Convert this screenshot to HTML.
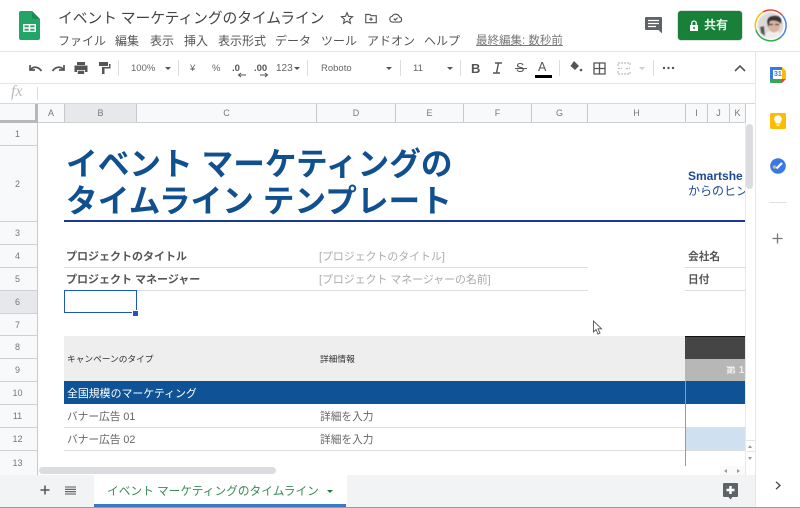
<!DOCTYPE html>
<html lang="ja"><head><meta charset="utf-8"><title>Sheet</title>
<style>
html,body{margin:0;padding:0;background:#fff}
#p{position:relative;width:800px;height:508px;overflow:hidden;background:#fff;font-family:"Liberation Sans","Noto Sans CJK JP",sans-serif;color:#444}
#p div,#p span.a,#p svg{position:absolute}
.t{white-space:nowrap;line-height:1}
.m{top:34px;font-size:12px;color:#555;line-height:14px;white-space:nowrap}
.ch{top:104px;height:18px;line-height:18px;font-size:9px;color:#777;text-align:center;background:#f8f9fa;border-right:1px solid #c8c8c8;box-sizing:border-box}
.rh{left:0;width:38px;box-sizing:border-box;background:#f8f9fa;border-bottom:1px solid #d0d0d0;border-right:1px solid #c8c8c8;font-size:9px;color:#777;text-align:center;padding-right:2px;display:flex;align-items:center;justify-content:center}
.tb{top:63px;font-size:9.5px;color:#666;line-height:11px;white-space:nowrap}
.sep{top:60px;width:1px;height:16px;background:#dadce0}
.tri{width:0;height:0;border-left:3px solid transparent;border-right:3px solid transparent;border-top:3px solid #555}
</style></head><body><div id="p">

<svg style="left:19px;top:11px" width="21" height="29" viewBox="0 0 21 29"><path d="M2 0H13L21 8V27a2 2 0 0 1-2 2H2a2 2 0 0 1-2-2V2a2 2 0 0 1 2-2z" fill="#23a566"/><path d="M13 0L21 8H15a2 2 0 0 1-2-2z" fill="#1b8a54"/><path d="M4 13H17V21H4zM5.500 14.400V16.300H9.700V14.400zM11.300 14.400V16.300H15.500V14.400zM5.500 17.700V19.600H9.700V17.700zM11.300 17.700V19.600H15.500V17.700z" fill="#fff" fill-rule="evenodd"/></svg>

<div class="t" style="left:58px;top:12px;font-size:14.800px;color:#444;letter-spacing:-.1px">イベント マーケティングのタイムライン</div>
<svg style="left:340px;top:11px" width="14" height="14" viewBox="0 0 24 24"><path d="M12 3l2.700 6.200 6.800.6-5.100 4.500 1.500 6.700L12 17.400 6.100 21l1.500-6.700L2.500 9.800l6.800-.6z" fill="none" stroke="#555" stroke-width="2"/></svg>
<svg style="left:364px;top:11px" width="14" height="14" viewBox="0 0 24 24"><path d="M3 6h7l2 2h9v12H3zM12 11v6M9 14h6" fill="none" stroke="#555" stroke-width="2"/></svg>
<svg style="left:388px;top:11px" width="15" height="14" viewBox="0 0 24 24"><path d="M7 19a5 5 0 0 1-.8-9.900A7 7 0 0 1 19 10.500 4.300 4.300 0 0 1 18.500 19zM9 13l2.500 2.500L15.500 11.500" fill="none" stroke="#555" stroke-width="2"/></svg>

<div class="m" style="left:58px">ファイル</div><div class="m" style="left:115px">編集</div><div class="m" style="left:150px">表示</div><div class="m" style="left:184px">挿入</div><div class="m" style="left:218px">表示形式</div><div class="m" style="left:275px">データ</div><div class="m" style="left:321px">ツール</div><div class="m" style="left:367px">アドオン</div><div class="m" style="left:424px">ヘルプ</div>
<div class="m" style="left:476px;font-size:11.500px;color:#777;text-decoration:underline">最終編集: 数秒前</div>

<svg style="left:645px;top:17px" width="17" height="17" viewBox="0 0 17 17"><path d="M1 0H16a1 1 0 0 1 1 1V16.500L13.500 13H1a1 1 0 0 1-1-1V1a1 1 0 0 1 1-1z" fill="#5f6368"/><path d="M3 3.500H14M3 6.500H14M3 9.500H11" stroke="#fff" stroke-width="1.300"/></svg>
<div style="left:678px;top:11px;width:64px;height:29px;background:#188038;border-radius:3px;box-shadow:0 0 1px #0b5a24"></div>
<svg style="left:689px;top:20px" width="10" height="12" viewBox="0 0 10 12"><path d="M1 5H9V11H1z" fill="#fff"/><path d="M2.800 5V3.200a2.200 2.200 0 0 1 4.400 0V5" fill="none" stroke="#fff" stroke-width="1.300"/><circle cx="5" cy="8" r="1" fill="#188038"/></svg>
<div class="t" style="left:704px;top:19px;font-size:12px;font-weight:bold;color:#e8f3ea">共有</div>
<svg style="left:754px;top:9px" width="33" height="33" viewBox="0 0 33 33"><defs><filter id="b" x="-10%" y="-10%" width="120%" height="120%"><feGaussianBlur stdDeviation=".5"/></filter></defs><circle cx="16.500" cy="16.500" r="15.500" fill="#fff"/><path d="M2 21A15.500 15.500 0 0 1 9 3" fill="none" stroke="#fbbc04" stroke-width="1.500"/><path d="M9 3A15.500 15.500 0 0 1 28 6" fill="none" stroke="#ea4335" stroke-width="1.500"/><path d="M28 6A15.500 15.500 0 0 1 27 28" fill="none" stroke="#4285f4" stroke-width="1.500"/><path d="M27 28A15.500 15.500 0 0 1 2 21" fill="none" stroke="#34a853" stroke-width="1.500"/><g filter="url(#b)"><circle cx="16.500" cy="16.500" r="13" fill="#dcdad8"/><path d="M11 29C11 24 13 22 19 22 25 22 27 24 27 26 24 29 16 31 11 29z" fill="#f0eeec"/><ellipse cx="20" cy="16" rx="6" ry="7.500" fill="#d9b3a0"/><path d="M13 13C13 7 19 6 24 7 28 9 28 12 27 15 25 12 20 11 16 12 15 14 15 17 14 18z" fill="#3a3634"/><path d="M15 15.500H19M21 15.500H25" stroke="#333" stroke-width="1.200"/><path d="M6 18L10 17 11 27 7 24z" fill="#555"/></g></svg>

<div style="left:0;top:51px;width:800px;height:1px;background:#e4e4e4"></div>
<div style="left:0;top:83px;width:755px;height:1px;background:#e4e4e4"></div>

<svg style="left:28px;top:61px" width="15" height="14" viewBox="0 0 15 14"><path d="M2 4V9H7M2.500 8.500C5 5.500 10 5 13.500 10" fill="none" stroke="#555" stroke-width="1.700"/></svg>
<svg style="left:51px;top:61px" width="15" height="14" viewBox="0 0 15 14"><path d="M13 4V9H8M12.500 8.500C10 5.500 5 5 1.500 10" fill="none" stroke="#555" stroke-width="1.700"/></svg>
<svg style="left:74px;top:61px" width="14" height="14" viewBox="0 0 14 14"><path d="M3 1H11V4H3zM0.500 4.500H13.500V11H11V9H3V11H0.500zM3.800 9.800H10.200V13H3.800z" fill="#555"/></svg>
<svg style="left:98px;top:61px" width="13" height="14" viewBox="0 0 13 14"><path d="M1 1H10V5H1zM11 3H12.500V7.500H6.500V13H4V6H11z" fill="#555"/></svg>
<div class="sep" style="left:118px"></div>
<div class="tb" style="left:131px">100%</div><div class="a tri" style="position:absolute;left:165px;top:67px"></div>
<div class="sep" style="left:178px"></div>
<div class="tb" style="left:190px">¥</div><div class="tb" style="left:212px">%</div>
<div class="tb" style="left:232px;font-weight:bold;color:#555">.0</div>
<svg style="left:237px;top:72px" width="9" height="6" viewBox="0 0 9 6"><path d="M9 3H2M4 1L1.500 3 4 5" fill="none" stroke="#555" stroke-width="1"/></svg>
<div class="tb" style="left:254px;font-weight:bold;color:#555">.00</div>
<svg style="left:260px;top:72px" width="9" height="6" viewBox="0 0 9 6"><path d="M0 3H7M5 1L7.500 3 5 5" fill="none" stroke="#555" stroke-width="1"/></svg>
<div class="tb" style="left:276px;font-size:10px">123</div><div class="tri" style="left:294px;top:67px"></div>
<div class="sep" style="left:307px"></div>
<div class="tb" style="left:321px">Roboto</div><div class="tri" style="left:386px;top:67px"></div>
<div class="sep" style="left:400px"></div>
<div class="tb" style="left:413px">11</div><div class="tri" style="left:447px;top:67px"></div>
<div class="sep" style="left:460px"></div>
<div class="t" style="left:471px;top:62px;font-size:13px;font-weight:bold;color:#555">B</div>
<svg style="left:492px;top:62px" width="11" height="12" viewBox="0 0 11 12"><path d="M3 1H10M1 11H8M6.500 1L4.500 11" fill="none" stroke="#555" stroke-width="1.400"/></svg>
<div class="t" style="left:516px;top:62px;font-size:12.500px;color:#555">S</div>
<div style="left:515px;top:68px;width:12px;height:1px;background:#555"></div>
<div class="t" style="left:538px;top:61px;font-size:12.500px;color:#555">A</div>
<div style="left:535px;top:75px;width:17px;height:3px;background:#000"></div>
<div class="sep" style="left:559px"></div>
<svg style="left:569px;top:60px" width="14" height="14" viewBox="0 0 14 14"><path d="M5 1L10 6 6 10 1.500 6z" fill="#555"/><circle cx="12" cy="10" r="1.300" fill="#555"/></svg>
<svg style="left:593px;top:62px" width="13" height="13" viewBox="0 0 13 13"><path d="M1 1H12V12H1zM6.500 1V12M1 6.500H12" fill="none" stroke="#555" stroke-width="1.300"/></svg>
<svg style="left:617px;top:62px" width="14" height="13" viewBox="0 0 14 13"><path d="M1 4V1H13V4M1 9V12H13V9M1 6.500H5M9 6.500H13" fill="none" stroke="#bbb" stroke-width="1.200" stroke-dasharray="2 1"/></svg>
<div class="tri" style="left:639px;top:67px;border-top-color:#ccc"></div>
<div class="sep" style="left:653px"></div>
<svg style="left:662px;top:66px" width="13" height="4" viewBox="0 0 13 4"><circle cx="2" cy="2" r="1.200" fill="#555"/><circle cx="6.500" cy="2" r="1.200" fill="#555"/><circle cx="11" cy="2" r="1.200" fill="#555"/></svg>
<svg style="left:734px;top:64px" width="12" height="8" viewBox="0 0 12 8"><path d="M1 7L6 2 11 7" fill="none" stroke="#555" stroke-width="1.600"/></svg>

<div class="t" style="left:11px;top:84px;font-size:16px;font-style:italic;font-family:'Liberation Serif',serif;color:#bbb">fx</div>
<div style="left:37px;top:87px;width:1px;height:13px;background:#dcdcdc"></div>
<div style="left:0;top:103px;width:755px;height:1px;background:#d8d8d8"></div>

<div class="ch" style="left:0;width:38px;border-right:3px solid #b8b8b8;border-bottom:3px solid #b8b8b8;height:19px"></div>
<div class="ch" style="left:38px;width:27px">A</div>
<div class="ch" style="left:65px;width:72px;background:#e6e8eb">B</div>
<div class="ch" style="left:137px;width:180px">C</div>
<div class="ch" style="left:317px;width:79px">D</div>
<div class="ch" style="left:396px;width:68px">E</div>
<div class="ch" style="left:464px;width:68px">F</div>
<div class="ch" style="left:532px;width:56px">G</div>
<div class="ch" style="left:588px;width:98px">H</div>
<div class="ch" style="left:686px;width:22px">I</div>
<div class="ch" style="left:708px;width:22px">J</div>
<div class="ch" style="left:730px;width:16px">K</div>
<div style="left:38px;top:122px;width:708px;height:1px;background:#d0d0d0"></div>

<div class="rh" style="top:123px;height:23px">1</div>
<div class="rh" style="top:146px;height:76px">2</div>
<div class="rh" style="top:222px;height:23px">3</div>
<div class="rh" style="top:245px;height:23px">4</div>
<div class="rh" style="top:268px;height:23px">5</div>
<div class="rh" style="top:291px;height:23px;background:#e6e8eb">6</div>
<div class="rh" style="top:314px;height:22px">7</div>
<div class="rh" style="top:336px;height:23px">8</div>
<div class="rh" style="top:359px;height:23px">9</div>
<div class="rh" style="top:382px;height:23px">10</div>
<div class="rh" style="top:405px;height:23px">11</div>
<div class="rh" style="top:428px;height:23px">12</div>
<div class="rh" style="top:451px;height:24px;border-bottom:0">13</div>

<div class="t" style="left:66px;top:146px;font-size:31.700px;font-weight:bold;color:#11508f;line-height:37px">イベント マーケティングの<br>タイムライン テンプレート</div>
<div style="left:64px;top:220px;width:681px;height:2px;background:#1b3a8f"></div>
<div class="t" style="left:688px;top:169px;font-size:12px;font-weight:bold;color:#1b4a92;line-height:15px;width:57px;overflow:hidden">Smartshe<br><span style="font-weight:normal">からのヒン</span></div>

<div class="t" style="left:66px;top:252px;font-size:11px;font-weight:bold;color:#555">プロジェクトのタイトル</div>
<div class="t" style="left:66px;top:275px;font-size:11px;font-weight:bold;color:#555">プロジェクト マネージャー</div>
<div class="t" style="left:319px;top:252px;font-size:10.900px;color:#aaa">[プロジェクトのタイトル]</div>
<div class="t" style="left:319px;top:275px;font-size:10.900px;color:#aaa">[プロジェクト マネージャーの名前]</div>
<div class="t" style="left:688px;top:252px;font-size:10.700px;font-weight:bold;color:#555">会社名</div>
<div class="t" style="left:688px;top:275px;font-size:10.700px;font-weight:bold;color:#555">日付</div>
<div style="left:64px;top:267px;width:524px;height:1px;background:#ddd"></div>
<div style="left:64px;top:290px;width:524px;height:1px;background:#ddd"></div>
<div style="left:685px;top:267px;width:60px;height:1px;background:#ddd"></div>
<div style="left:685px;top:290px;width:60px;height:1px;background:#ddd"></div>

<div style="left:64px;top:290px;width:73px;height:23px;box-sizing:border-box;border:1px solid #1a56c4"></div>
<div style="left:133px;top:311px;width:5px;height:5px;background:#1a56c4;outline:1px solid #fff"></div>

<div style="left:64px;top:336px;width:621px;height:45px;background:#eee"></div>
<div class="t" style="left:67px;top:355px;font-size:8.700px;color:#333">キャンペーンのタイプ</div>
<div class="t" style="left:320px;top:355px;font-size:8.700px;color:#333">詳細情報</div>
<div style="left:685px;top:336px;width:60px;height:23px;background:#454545;border-top:1px solid #111;box-sizing:border-box"></div>
<div style="left:685px;top:359px;width:60px;height:22px;background:#b7b7b7"></div>
<div class="t" style="left:726px;top:366px;font-size:10px;font-weight:bold;color:#eee;width:18px;overflow:hidden">第 1</div>

<div style="left:64px;top:381px;width:681px;height:23px;background:#0f5295"></div>
<div class="t" style="left:67px;top:389px;font-size:10.900px;color:#fff">全国規模のマーケティング</div>
<div class="t" style="left:67px;top:412px;font-size:10.700px;color:#666">バナー広告 01</div>
<div class="t" style="left:320px;top:412px;font-size:10.700px;color:#666">詳細を入力</div>
<div class="t" style="left:67px;top:435px;font-size:10.700px;color:#666">バナー広告 02</div>
<div class="t" style="left:320px;top:435px;font-size:10.700px;color:#666">詳細を入力</div>
<div style="left:64px;top:427px;width:681px;height:1px;background:#ddd"></div>
<div style="left:64px;top:450px;width:681px;height:1px;background:#ddd"></div>
<div style="left:685px;top:428px;width:60px;height:22px;background:#cfe0f1"></div>
<div style="left:685px;top:381px;width:1px;height:85px;background:#999"></div>

<svg style="left:592px;top:320px" width="11" height="15" viewBox="0 0 11 15"><path d="M1.500 1V12L4 9.500 6 14 8 13 6 8.800H9.500z" fill="#fff" stroke="#555" stroke-width=".9"/></svg>

<div style="left:745px;top:122px;width:10px;height:353px;background:#fff;border-left:1px solid #e8e8e8;box-sizing:border-box"></div>
<div style="left:746px;top:124px;width:7px;height:65px;background:#dadce0;border-radius:4px"></div>
<div style="left:39px;top:467px;width:237px;height:7px;background:#dadce0;border-radius:4px"></div>
<div style="left:746px;top:440px;width:9px;height:25px;border-top:1px solid #e5e5e5;box-sizing:border-box"></div>
<div style="left:747px;top:451px;width:8px;height:1px;background:#e5e5e5"></div>
<div style="left:720px;top:466px;width:25px;height:9px;background:#fafafa"></div>
<div class="tri" style="left:748px;top:445px;border-top:0;border-bottom:3px solid #999;border-left-width:2px;border-right-width:2px"></div>
<div class="tri" style="left:748px;top:457px;border-top:3px solid #999;border-left-width:2px;border-right-width:2px"></div>
<div class="tri" style="left:724px;top:469px;border:2px solid transparent;border-right:3px solid #999;border-left:0"></div>
<div class="tri" style="left:737px;top:469px;border:2px solid transparent;border-left:3px solid #999;border-right:0"></div>

<div style="left:0;top:475px;width:755px;height:32px;background:#f1f3f4"></div>
<svg style="left:40px;top:485px" width="10" height="10" viewBox="0 0 10 10"><path d="M5 0.500V9.500M0.500 5H9.500" stroke="#555" stroke-width="1.500"/></svg>
<svg style="left:65px;top:486px" width="11" height="9" viewBox="0 0 11 9"><path d="M0 1H11M0 3.300H11M0 5.700H11M0 8H11" stroke="#555" stroke-width="1.100"/></svg>
<div style="left:94px;top:475px;width:253px;height:29px;background:#fff"></div>
<div style="left:94px;top:504px;width:252px;height:3px;background:#3b78c4"></div>
<div class="t" style="left:107px;top:486px;font-size:11.700px;color:#3c8a5a">イベント マーケティングのタイムライン</div>
<div class="tri" style="left:327px;top:490px;border-top-color:#188038"></div>
<svg style="left:723px;top:483px" width="15" height="17" viewBox="0 0 15 17"><path d="M1 0H14a1 1 0 0 1 1 1V13a1 1 0 0 1-1 1H9.500L7.500 16.500 5.500 14H1a1 1 0 0 1-1-1V1a1 1 0 0 1 1-1z" fill="#5f6368"/><path d="M7.500 3V11M3.500 7H11.500" stroke="#fff" stroke-width="2.400"/></svg>
<div style="left:0;top:507px;width:800px;height:1px;background:#9a9a9a"></div>

<div style="left:755px;top:52px;width:1px;height:455px;background:#e6e6e6"></div>
<svg style="left:770px;top:67px" width="16" height="16" viewBox="0 0 16 16"><rect width="16" height="16" rx="1" fill="#fff"/><path d="M0 3V13H3V3z" fill="#3b78e7"/><path d="M0 0H12V3H0z" fill="#3b78e7"/><path d="M12 0L16 4V12H12z" fill="#fbbc04"/><path d="M0 12H12V16H1a1 1 0 0 1-1-1z" fill="#34a853"/><path d="M12 12H16L12 16z" fill="#ea4335"/></svg>
<div class="t" style="left:774px;top:71px;font-size:7px;font-weight:bold;color:#3b78e7">31</div>
<svg style="left:770px;top:113px" width="16" height="16" viewBox="0 0 16 16"><rect width="16" height="16" rx="1.500" fill="#fbbc04"/><path d="M5.500 10.500V9A3.800 3.800 0 1 1 10.500 9V10.500zM6.500 11.500H9.500V12.800H6.500z" fill="#fff"/></svg>
<svg style="left:770px;top:158px" width="16" height="16" viewBox="0 0 16 16"><circle cx="8" cy="8" r="7.800" fill="#3b78e7"/><circle cx="4.500" cy="9" r="1.800" fill="#c9b98a"/><path d="M6.500 10.500L12 5" stroke="#fff" stroke-width="2.200"/></svg>
<div style="left:769px;top:202px;width:18px;height:1px;background:#e2e2e2"></div>
<svg style="left:772px;top:233px" width="11" height="11" viewBox="0 0 11 11"><path d="M5.500 0.500V10.500M0.500 5.500H10.500" stroke="#777" stroke-width="1.300"/></svg>
<svg style="left:775px;top:481px" width="6" height="9" viewBox="0 0 6 9"><path d="M1 .8L5 4.500 1 8.200" fill="none" stroke="#444" stroke-width="1.300"/></svg>

</div></body></html>
